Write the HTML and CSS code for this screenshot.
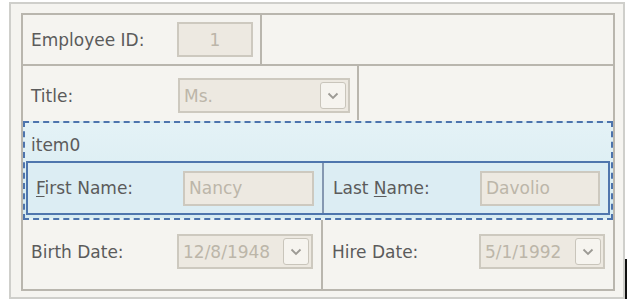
FILE: index.html
```html
<!DOCTYPE html>
<html lang="en">
  <head>
    <meta charset="UTF-8" />
    <title>Employee</title>
    <link rel="stylesheet" href="styles.css">
  </head>
  <body>
    <div class="panel">
      <div class="frame">
        <div class="row row1">
          <div class="cell field">
            <span class="label">Employee ID:</span>
            <div class="box box-id">1</div>
          </div>
          <div class="cell"></div>
        </div>
        <div class="row row2">
          <div class="cell field">
            <span class="label">Title:</span>
            <div class="box combo combo-title">
              <span class="value">Ms.</span>
              <span class="drop">
                <svg width="12" height="8" viewBox="0 0 12 8"><path d="M1.5 1.5 L6 6 L10.5 1.5" fill="none" stroke="#9c9a94" stroke-width="1.8"/></svg>
              </span>
            </div>
          </div>
          <div class="cell"></div>
        </div>
        <div class="group">
          <div class="caption">item0</div>
          <div class="group-inner">
            <div class="cell field first">
              <span class="label"><u>F</u>irst Name:</span>
              <div class="box box-first">Nancy</div>
            </div>
            <div class="cell field last">
              <span class="label">Last <u>N</u>ame:</span>
              <div class="box box-last">Davolio</div>
            </div>
          </div>
        </div>
        <div class="row row4">
          <div class="cell field">
            <span class="label">Birth Date:</span>
            <div class="box combo combo-birth">
              <span class="value">12/8/1948</span>
              <span class="drop">
                <svg width="12" height="8" viewBox="0 0 12 8"><path d="M1.5 1.5 L6 6 L10.5 1.5" fill="none" stroke="#9c9a94" stroke-width="1.8"/></svg>
              </span>
            </div>
          </div>
          <div class="cell field last">
            <span class="label">Hire Date:</span>
            <div class="box combo combo-hire">
              <span class="value">5/1/1992</span>
              <span class="drop">
                <svg width="12" height="8" viewBox="0 0 12 8"><path d="M1.5 1.5 L6 6 L10.5 1.5" fill="none" stroke="#9c9a94" stroke-width="1.8"/></svg>
              </span>
            </div>
          </div>
        </div>
      </div>
      <div class="stray"></div>
    </div>
  </body>
</html>
```

FILE: styles.css
```css
body {
  margin: 0;
  background-color: #ffffff;
  font-family: "DejaVu Sans", Verdana, sans-serif;
  font-size: 17px;
  color: #5b5b5b;
}
.panel {
  position: relative;
  box-sizing: border-box;
  width: 616px;
  height: 297px;
  margin: 2px 0 0 9px;
  padding: 9px 9px 0 10px;
  background-color: #f5f4f0;
  border: 2px solid #cfcfcb;
}
.frame {
  box-sizing: border-box;
  width: 594px;
  height: 278px;
  border: 2px solid #b9b6ae;
}
.cell {
  box-sizing: border-box;
}
.row {
  display: flex;
}
.row1 {
  height: 49px;
  border-bottom: 2px solid #b9b6ae;
}
.row1 .cell:first-child {
  width: 239px;
  border-right: 2px solid #b9b6ae;
}
.row2 {
  height: 54px;
}
.row2 .cell:first-child {
  width: 336px;
  border-right: 2px solid #b9b6ae;
  padding-top: 5px;
}
.row4 {
  height: 69px;
}
.row4 .cell:first-child {
  width: 300px;
  border-right: 2px solid #b9b6ae;
}
.row4 .field {
  padding-bottom: 6px;
}
.field {
  display: flex;
  align-items: center;
  padding-left: 8px;
}
.label {
  width: 146px;
  flex-shrink: 0;
}
.label u {
  text-decoration-thickness: 1px;
  text-underline-offset: 2px;
}
.box {
  box-sizing: border-box;
  height: 35px;
  background-color: #ede9e1;
  border: 2px solid #cdc9bf;
  color: #bcb6a9;
  display: flex;
  align-items: center;
  padding-left: 4px;
}
.box-id {
  width: 76px;
  justify-content: center;
  padding-left: 0;
}
.combo {
  justify-content: space-between;
  padding-right: 2px;
}
.combo-title {
  width: 172px;
  margin-left: 1px;
}
.combo-birth {
  width: 136px;
}
.combo-hire {
  width: 126px;
}
.drop {
  box-sizing: border-box;
  width: 26px;
  height: 27px;
  background-color: #f6f4ef;
  border: 1px solid #c9c5bb;
  border-radius: 3px;
  display: flex;
  align-items: center;
  justify-content: center;
}
.group {
  box-sizing: border-box;
  height: 99px;
  margin-top: 1px;
  padding: 0 1px 2px 1px;
  border: 2px dashed #4d74ad;
  background: linear-gradient(#e4f2f6, #d6ebf1);
}
.caption {
  height: 38px;
  line-height: 44px;
  padding-left: 5px;
}
.group-inner {
  display: flex;
  height: 54px;
  box-sizing: border-box;
  border: 2px solid #4f76ad;
  background-color: #dcedf3;
}
.group-inner .first {
  width: 296px;
  border-right: 2px solid #8598b1;
  padding-left: 8px;
}
.group-inner .first .label {
  width: 147px;
}
.box-first {
  width: 131px;
}
.box-last {
  width: 120px;
}
.last {
  padding-left: 9px;
}
.last .label {
  width: 147px;
}
.stray {
  position: absolute;
  right: -4px;
  bottom: -2px;
  width: 2px;
  height: 40px;
  background-color: #111111;
}
```
